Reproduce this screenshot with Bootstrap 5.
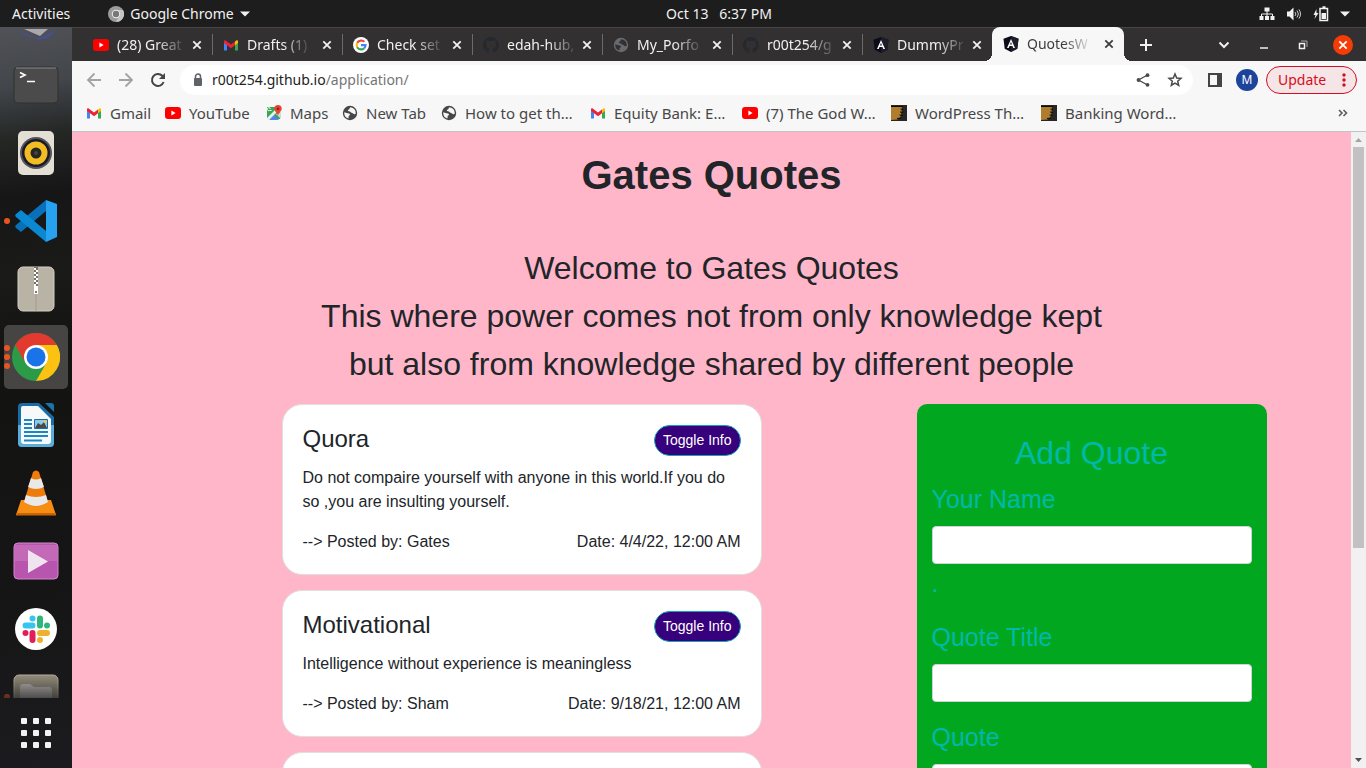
<!DOCTYPE html>
<html lang="en">
<head>
<meta charset="utf-8">
<meta name="viewport" content="width=device-width, initial-scale=1">
<title>Gates Quotes</title>
<link rel="stylesheet" href="https://cdn.jsdelivr.net/npm/bootstrap@5.3.0/dist/css/bootstrap.min.css">
<style>
  :root { --ui: "Noto Sans", "Open Sans", sans-serif; --page: "Liberation Sans", Arial, sans-serif; }
  body { font-family: var(--ui); font-size: 14px; line-height: 20px; background: #1d1d1d; }
  svg { display: block; flex: none; }
  button { font: inherit; color: inherit; }
  .plain-btn { background: none; border: 0; padding: 0; }

  /* desktop top bar */
  .system-bar { height: 27px; background: #1d1d1d; color: #f2f2f2; display: grid; grid-template-columns: 1fr auto 1fr; }
  .app-menu { margin-left: 38px; gap: 6px; }
  .system-clock { padding-left: 72px; }
  .status-icons { gap: 11px; }

  /* dock */
  .dock { width: 72px; background: linear-gradient(172deg, #505257 0, #43464a 60px, #34373a 85px, #252725 112px, #161616 170px, #1a1a19 250px, #131312 330px, #151515 560px, #1c1c20 100%); }
  .dock-item { width: 64px; height: 64px; border-radius: 5px; position: relative; }
  .dock-item.current { background: #464543; }
  .dock-peek { height: 22px; }
  .run-dots { position: absolute; left: 0; top: 0; bottom: 0; width: 6px; gap: 3px; }
  .run-dots i { width: 6px; height: 6px; border-radius: 50%; background: #e95420; }
  .dock-apps { height: 70px; }
  .dim-item { -webkit-mask-image: linear-gradient(#000 12px, rgba(0,0,0,.35) 33px); mask-image: linear-gradient(#000 12px, rgba(0,0,0,.35) 33px); }

  /* tab strip */
  .tab-strip { height: 34px; background: #323031; border-top: 1px solid #474546; padding-left: 10px; color: #f1f1f1; }
  .web-tab { flex: 0 1 130px; min-width: 0; padding: 0 10px 0 11px; position: relative; }
  .web-tab + .web-tab::before { content: ""; position: absolute; left: 0; top: 6px; height: 21px; width: 1px; background: #6d6b6c; }
  .web-tab .tab-name { white-space: nowrap; -webkit-mask-image: linear-gradient(90deg, #000 60%, rgba(0,0,0,.15)); mask-image: linear-gradient(90deg, #000 60%, rgba(0,0,0,.15)); }
  .web-tab.open { flex-basis: 132px; background: #f7f7f7; color: #3c3c3c; border-radius: 8px 8px 0 0; height: 34px; margin-top: -1px; }
  .web-tab.open::before { display: none; }
  .corner { position: absolute; bottom: 0; width: 8px; height: 8px; }
  .corner.start { left: -8px; background: radial-gradient(circle at 0 0, #323031 8px, #f7f7f7 8px); }
  .corner.end { right: -8px; background: radial-gradient(circle at 100% 0, #323031 8px, #f7f7f7 8px); }
  .win-controls { gap: 21px; padding-right: 13px; }
  .win-close { width: 20px; height: 20px; border-radius: 50%; background: #f53b06; }

  /* address row */
  .tool-row { height: 37px; background: #f7f7f7; padding: 0 9px 0 14px; color: #4a4a4a; }
  .omnibox { height: 30px; border-radius: 15px; background: #fff; padding: 0 10px 0 12px; margin: 0 15px 0 -2px; }
  .omnibox .path { color: #757575; }
  .omnibox .host { color: #222; }
  .avatar { width: 22px; height: 22px; border-radius: 50%; background: #1d449b; color: #fff; font-size: 12px; margin: 0 8px 0 14px; }
  .update-btn { height: 28px; width: 91px; border: 1px solid #d50d22; border-radius: 14px; background: #f6e5e6; color: #d50d22; padding: 0 10px 0 11px; }

  /* bookmarks */
  .mark-row { height: 34px; background: #f7f7f7; border-bottom: 1px solid #c4c4c6; padding: 0 18px 3px 14px; color: #474747; font-size: 15px; }
  .mark-list { display: grid; grid-template-columns: 79px 101px 76px 99px 149px 152px 149px 150px 150px; }
  .mark-list a { color: inherit; text-decoration: none; white-space: nowrap; }

  /* quotes page */
  .quotes-page { background: #ffb6c8; font-family: var(--page); font-size: 16px; line-height: 24px; color: #212529; overflow: hidden; }
  .page-inner { max-width: 1140px; padding-top: 19px; }
  .page-inner h1 { font-size: 40px; line-height: 48px; margin-bottom: 45px; }
  .welcome { font-size: 32px; line-height: 48px; }
  .quote-row { --bs-gutter-x: 30px; }
  .quote-card { max-width: 480px; border: 1px solid #dfdfdf; border-radius: 20px; margin: 0 auto 15px; }
  .quote-card .card-body { padding: 20px; }
  .quote-card h2 { font-size: 24px; margin-bottom: 12px; }
  .toggle-btn { font-size: 14px; line-height: 21px; padding: 4px 8px; border: 1px solid #17a2b8; border-radius: 16px; background: #37007d; color: #fff; height: 31px; }
  .quote-form { background: #02a720; border-radius: 10px; padding: 30px 15px; color: #00b8ac; font-size: 25px; line-height: 38px; }
  .quote-form h2 { font-size: 32px; margin-bottom: 8px; }
  .quote-form .form-control { height: 38px; border: 1px solid #ced4da; border-radius: 4px; background: #fff; }
  .quote-form label { margin-bottom: 8px; display: block; }

  .scroll-rail { width: 15px; background: #f1f1f1; }
  .scroll-thumb { width: 11px; flex: 0 0 63%; background: #c1c1c1; }
</style>
</head>
<body>
<svg width="0" height="0" class="position-absolute" aria-hidden="true">
  <symbol id="yt" viewBox="0 0 16 16"><rect y="2" width="16" height="12" rx="3" fill="#f00"/><path d="M6.400 5.600v4.800L10.600 8z" fill="#fff"/></symbol>
  <symbol id="gm" viewBox="0 0 16 16"><path d="M1 4v9.500h3V7z" fill="#4285f4"/><path d="M15 4v9.500h-3V7z" fill="#34a853"/><path d="M12 4.500l1-.8c1-.8 2-.3 2 .8v1.500L12 8.300z" fill="#fbbc04"/><path d="M1 4.500c0-1.100 1-1.600 2-.8l5 3.800 4-3v3.800l-4 3-4-3-3-2.300z" fill="#ea2435"/></symbol>
  <symbol id="goo" viewBox="0 0 16 16"><circle cx="8" cy="8" r="8" fill="#fff"/><g fill="none" stroke-width="2.200"><path d="M4.200 5.800A4.500 4.500 0 0 1 11.300 4.800" stroke="#ea4335"/><path d="M4.200 10.200a4.500 4.500 0 0 1 0-4.400" stroke="#fbbc05"/><path d="M11.200 11.200a4.500 4.500 0 0 1-7-1" stroke="#34a853"/><path d="M8 8.200h4.500a4.500 4.500 0 0 1-1.300 3" stroke="#4285f4"/></g></symbol>
  <symbol id="git" viewBox="0 0 16 16"><path fill="currentColor" d="M8 0a8 8 0 0 0-2.530 15.590c.4.070.55-.170.55-.380v-1.500c-2 .4-2.500-.500-2.700-.950-.1-.230-.5-.940-.8-1.130-.300-.150-.700-.520 0-.530.600 0 1.100.580 1.200.820.700 1.200 1.900.860 2.300.650.100-.520.300-.870.500-1.070-1.800-.200-3.600-.9-3.600-3.950 0-.870.300-1.590.8-2.150-.100-.200-.400-1.020.100-2.120 0 0 .7-.210 2.200.820a7.600 7.600 0 0 1 4 0c1.500-1.040 2.200-.820 2.200-.820.400 1.100.200 1.920.100 2.120.5.560.8 1.270.8 2.150 0 3.070-1.900 3.750-3.700 3.950.3.250.5.730.5 1.480v2.200c0 .210.150.460.550.380A8 8 0 0 0 8 0"/></symbol>
  <symbol id="globe" viewBox="0 0 16 16"><circle cx="8" cy="8" r="7.200" fill="currentColor"/><path d="M8.500 2.200c-1.500.8-.5 1.800-1.800 2.400-1.200.5-1.300 1.600.2 1.700 1.800 0 1.600 1.600 3.100 1.600 1.700-.1 1.200 2.200 3.800.8A6 6 0 0 0 8.500 2.200M2.300 7.300c1.500.5 3.100 1 4.600 1.100 1.300.1 1.500 1.700.3 2.200-1.100.4-.2 2-.9 3A5.900 5.900 0 0 1 2.300 7.300" fill="#f7f7f7"/></symbol>
  <symbol id="globe-dark" viewBox="0 0 16 16"><circle cx="8" cy="8" r="7.200" fill="#676a6f"/><path d="M8.500 2.200c-1.500.8-.5 1.800-1.800 2.400-1.200.5-1.300 1.600.2 1.700 1.800 0 1.600 1.600 3.100 1.600 1.700-.1 1.200 2.200 3.800.8A6 6 0 0 0 8.500 2.200M2.300 7.300c1.500.5 3.100 1 4.600 1.100 1.300.1 1.500 1.700.3 2.200-1.100.4-.2 2-.9 3A5.900 5.900 0 0 1 2.300 7.300" fill="#323031"/></symbol>
  <symbol id="ng" viewBox="0 0 16 16"><path d="M8 0l7.500 2.700-1.200 10L8 16l-6.300-3.300L.5 2.700z" fill="#0b0c18"/><path d="M8 0l7.500 2.700-1.200 10L8 16z" fill="#1c1d28"/><path d="M8 3l4 9h-1.700l-.8-2H6.500l-.8 2H4zm0 3L7 8.500h2z" fill="#fff" fill-rule="evenodd"/></symbol>
  <symbol id="map" viewBox="0 0 16 16"><path d="M1 2h13v12H1z" fill="#34a853"/><path d="M3 15l5-5 5 5z" fill="#5584f0"/><path d="M1 13l9-9 2 2-9 9H1z" fill="#eee"/><path d="M10 9l5 5V7z" fill="#d5d7da"/><path d="M12 0a3.700 3.700 0 0 1 3.700 3.700C15.700 6.500 12.500 7.500 12 11 11.500 7.500 8.300 6.500 8.300 3.700A3.700 3.700 0 0 1 12 0" fill="#ea4335"/><circle cx="12" cy="3.700" r="1.300" fill="#8e1c17"/><path d="M5.500 5.500h-2a1.500 1.500 0 1 1 .8-1.500" fill="none" stroke="#fff"/></symbol>
  <symbol id="wp" viewBox="0 0 16 16"><path d="M0 0h16v16H0z" fill="#292725"/><path d="M0 2h11l-.5 5-1 5-3 2.500L0 15z" fill="#b07c2e"/><path d="M0 1.500h12M9.500 4l2.500.5M9 7l3 .5M8.500 10l3 .5M6 13.500l4-.5" stroke="#0b0908"/></symbol>
  <symbol id="x" viewBox="0 0 10 10"><path d="M1.300 1.300l7.400 7.400M8.700 1.300L1.300 8.700" stroke="currentColor" stroke-width="1.800"/></symbol>
</svg>

<div class="vh-100 d-flex flex-column overflow-hidden">
  <header class="system-bar align-items-center flex-shrink-0">
    <div class="d-flex align-items-center">
      <button class="plain-btn ms-2 ps-1">Activities</button>
      <button class="app-menu plain-btn d-flex align-items-center">
        <svg width="16" height="16" viewBox="0 0 16 16"><circle cx="8" cy="8" r="8" fill="#9b9b9b"/><path d="M8 4h7a8 8 0 0 1-7 12l3-6z" fill="#c4c4c4"/><circle cx="8" cy="8" r="4.200" fill="#eee"/><circle cx="8" cy="8" r="3.200" fill="#777"/></svg>
        <span>Google Chrome</span>
        <svg width="10" height="6" viewBox="0 0 10 6"><path d="M0 0.500h10L5 5.500z" fill="currentColor"/></svg>
      </button>
    </div>
    <time class="system-clock">Oct 13 &nbsp; 6:37 PM</time>
    <div class="status-icons d-flex align-items-center justify-content-end pe-3">
      <svg width="16" height="14" viewBox="0 0 16 14" fill="#f2f2f2"><path d="M5.500 0.500h5v4h-5zM0.500 9h4v4h-4zM6 9h4v4H6zM11.500 9h4v4h-4z"/><path d="M8 4v5M2.500 9V7h11v2" fill="none" stroke="#f2f2f2"/></svg>
      <svg width="16" height="14" viewBox="0 0 16 14" fill="none" stroke="#f2f2f2"><path d="M1 4.500h2.500l4-4v13l-4-4H1z" fill="#f2f2f2" stroke="none"/><path d="M9 5a3 3 0 0 1 0 4M11 3.500a5.500 5.500 0 0 1 0 7M13 2.500a8 8 0 0 1 0 9" stroke="#ccc"/></svg>
      <svg width="16" height="16" viewBox="0 0 16 16"><path d="M3.500 3L.5 9h2l-1 4 4-6h-2z" fill="#f2f2f2"/><path d="M7 2.500h7.500v12H7zM9.500 1h3" fill="none" stroke="#f2f2f2" stroke-width="1.500"/><path d="M8.500 7H13v6H8.500z" fill="#f2f2f2"/></svg>
      <svg width="10" height="6" viewBox="0 0 10 6"><path d="M0 0.500h10L5 5.500z" fill="#f2f2f2"/></svg>
    </div>
  </header>

  <div class="d-flex flex-grow-1 overflow-hidden">
    <nav class="dock d-flex flex-column flex-shrink-0" aria-label="Dock">
      <div class="d-flex flex-column align-items-center gap-1 flex-grow-1 overflow-hidden">
        <div class="dock-peek flex-shrink-0">
          <svg width="40" height="16" viewBox="0 0 40 16"><path d="M8 2l16 7 8-7z" fill="#a9a9ad"/><path d="M2 2c5 5 12 6 18 8-7 1-14-2-18-8M39 2c-3 8-11 12-20 10 8-3 13-4 20-10" fill="#494f8b"/></svg>
        </div>
        <button class="dock-item plain-btn d-flex align-items-center justify-content-center flex-shrink-0" aria-label="Terminal">
          <svg width="46" height="38" viewBox="0 0 46 38"><rect x="1" y="1" width="44" height="36" rx="4" fill="#4b4b4b" stroke="#303030"/><path d="M3 2h40" stroke="#858585"/><path d="M7 6.500l5 2.500-5 2.500M14 15.500h8" fill="none" stroke="#fff" stroke-width="1.700"/></svg>
        </button>
        <button class="dock-item plain-btn d-flex align-items-center justify-content-center flex-shrink-0" aria-label="Rhythmbox">
          <svg width="38" height="46" viewBox="0 0 38 46"><rect x="1" y="1" width="36" height="44" rx="5" fill="#e3dfd5"/><circle cx="19" cy="23" r="16" fill="#555457"/><circle cx="19" cy="23" r="14" fill="#191a2b"/><circle cx="19" cy="23" r="11.500" fill="#f2bd22"/><circle cx="19" cy="23" r="5.500" fill="#252524"/><circle cx="19" cy="23" r="2" fill="#444"/></svg>
        </button>
        <button class="dock-item plain-btn d-flex align-items-center justify-content-center flex-shrink-0" aria-label="Visual Studio Code">
          <span class="run-dots d-flex flex-column justify-content-center"><i></i></span>
          <svg width="42" height="42" viewBox="0 0 42 42"><path d="M31 0v11L6 32l-5-4c-1-1-1-2 0-3z" fill="#0b70ba"/><path d="M31 42V31L6 10l-5 4c-1 1-1 2 0 3z" fill="#0b88d2"/><path d="M31 0l11 4v33l-11 5z" fill="#27a2f0"/></svg>
        </button>
        <button class="dock-item plain-btn d-flex align-items-center justify-content-center flex-shrink-0" aria-label="Archive Manager">
          <svg width="38" height="46" viewBox="0 0 38 46"><rect x="1" y="1" width="36" height="44" rx="5" fill="#b8b3a5" stroke="#d4d0c4"/><path d="M19 28v17" stroke="#a29d90"/><path d="M17 1h4v20h-4z" fill="#777368"/><path d="M17 3h2M19 5h2M17 7h2M19 9h2M17 11h2M19 13h2M17 15h2M19 17h2M17 19h2" stroke="#fff" stroke-width="2"/><path d="M17 20h4v8h-4z" fill="#fff"/><path d="M18 25h2v2h-2z" fill="#777"/></svg>
        </button>
        <button class="dock-item current plain-btn d-flex align-items-center justify-content-center flex-shrink-0" aria-label="Google Chrome">
          <span class="run-dots d-flex flex-column justify-content-center"><i></i><i></i><i></i></span>
          <svg width="48" height="48" viewBox="0 0 48 48"><circle cx="24" cy="24" r="24" fill="#2b9b48"/><path d="M24 12h20.800A24 24 0 0 1 24 48l10.400-18z" fill="#fcc212"/><path d="M3.200 12a24 24 0 0 1 41.600 0H24L13.600 30z" fill="#e23a2e"/><circle cx="24" cy="24" r="12" fill="#fff"/><circle cx="24" cy="24" r="9.500" fill="#1a73e8"/></svg>
        </button>
        <button class="dock-item plain-btn d-flex align-items-center justify-content-center flex-shrink-0" aria-label="LibreOffice Writer">
          <svg width="38" height="46" viewBox="0 0 38 46"><path d="M5 1h17l15 14v26q0 4-4 4H5q-4 0-4-4V5q0-4 4-4" fill="#186ca7"/><path d="M1 23h36v18q0 4-4 4H5q-4 0-4-4z" fill="#5aaedb"/><path d="M6 4h15l13 13v22q0 3-3 3H7q-3 0-3-3V6q0-2 2-2" fill="#f7f8f9"/><path d="M28 1h6q3 0 3 3v6z" fill="#1c73ac"/><path d="M7 18h8M7 22h8M7 26h8M7 30h24M7 34h24M7 38.500h18" stroke="#1b86c4" stroke-width="2"/><path d="M17.500 17.500h13v9h-13z" fill="#8ac9ed" stroke="#196da4"/><path d="M18 26l3-5 3 2 3-3 3 6z" fill="#494949"/><circle cx="28" cy="19.500" r="1.500" fill="#f5c842"/></svg>
        </button>
        <button class="dock-item plain-btn d-flex align-items-center justify-content-center flex-shrink-0" aria-label="VLC">
          <svg width="40" height="46" viewBox="0 0 40 46"><path d="M5 30h30l5 15H0z" fill="#f78d12"/><path d="M0 43h40v2.500H0z" fill="#c96503"/><path d="M17 2q3-3 6 0l9 30q-12 9-24 0z" fill="#ef7b0b"/><path d="M15 8q5 3 10 0l3 9q-8 4-16 0zM10 25q10 4 20 0l2 7q-12 8-24 0z" fill="#e9e9e9"/></svg>
        </button>
        <button class="dock-item plain-btn d-flex align-items-center justify-content-center flex-shrink-0" aria-label="Videos">
          <svg width="46" height="38" viewBox="0 0 46 38"><rect x="1" y="1" width="44" height="36" rx="4" fill="#b855ae" stroke="#d288ca"/><path d="M2 3h42v16H2z" fill="#c369b7"/><path d="M15 8l20 11.500L15 31z" fill="#f0e4f0"/></svg>
        </button>
        <button class="dock-item plain-btn d-flex align-items-center justify-content-center flex-shrink-0" aria-label="Slack">
          <svg width="42" height="42" viewBox="0 0 42 42"><circle cx="21" cy="21" r="21" fill="#fff"/><g stroke-width="6" stroke-linecap="round"><path d="M25 10.500v7M32 17.500h0" stroke="#2eb67d"/><path d="M10.500 17.500h7M17.500 10.500h0" stroke="#36c5f0"/><path d="M17.500 25v7M10.500 25h0" stroke="#e01e5a"/><path d="M25 25h7M25 32h0" stroke="#ecb22e"/></g></svg>
        </button>
        <button class="dock-item dim-item plain-btn d-flex align-items-center justify-content-center flex-shrink-0" aria-label="Files">
          <span class="run-dots d-flex flex-column justify-content-center"><i></i></span>
          <svg width="46" height="46" viewBox="0 0 46 46"><rect x="1" y="1" width="44" height="44" rx="5" fill="#8d8676" stroke="#b5ae9e"/><path d="M7 13q0-3 3-3h7l4 3h15q3 0 3 3v24H7z" fill="#b0aeaa"/></svg>
        </button>
      </div>
      <button class="dock-apps plain-btn d-flex align-items-center justify-content-center flex-shrink-0" aria-label="Show Applications">
        <svg width="30" height="30" viewBox="0 0 30 30" fill="#f3f3f3"><rect width="6" height="6" rx="1"/><rect x="12" width="6" height="6" rx="1"/><rect x="24" width="6" height="6" rx="1"/><rect y="12" width="6" height="6" rx="1"/><rect x="12" y="12" width="6" height="6" rx="1"/><rect x="24" y="12" width="6" height="6" rx="1"/><rect y="24" width="6" height="6" rx="1"/><rect x="12" y="24" width="6" height="6" rx="1"/><rect x="24" y="24" width="6" height="6" rx="1"/></svg>
      </button>
    </nav>

    <div class="d-flex flex-column flex-grow-1 overflow-hidden">
      <div class="tab-strip d-flex flex-shrink-0">
        <div class="web-tab d-flex align-items-center"><svg width="16" height="16" class="me-2"><use href="#yt"/></svg><span class="tab-name">(28) Great</span><button class="plain-btn ms-auto" aria-label="Close tab"><svg width="10" height="10"><use href="#x"/></svg></button></div>
        <div class="web-tab d-flex align-items-center"><svg width="16" height="16" class="me-2"><use href="#gm"/></svg><span class="tab-name">Drafts (1)</span><button class="plain-btn ms-auto" aria-label="Close tab"><svg width="10" height="10"><use href="#x"/></svg></button></div>
        <div class="web-tab d-flex align-items-center"><svg width="16" height="16" class="me-2"><use href="#goo"/></svg><span class="tab-name">Check set</span><button class="plain-btn ms-auto" aria-label="Close tab"><svg width="10" height="10"><use href="#x"/></svg></button></div>
        <div class="web-tab d-flex align-items-center"><svg width="16" height="16" class="me-2" color="#24292f"><use href="#git"/></svg><span class="tab-name">edah-hub,</span><button class="plain-btn ms-auto" aria-label="Close tab"><svg width="10" height="10"><use href="#x"/></svg></button></div>
        <div class="web-tab d-flex align-items-center"><svg width="16" height="16" class="me-2"><use href="#globe-dark"/></svg><span class="tab-name">My_Porfo</span><button class="plain-btn ms-auto" aria-label="Close tab"><svg width="10" height="10"><use href="#x"/></svg></button></div>
        <div class="web-tab d-flex align-items-center"><svg width="16" height="16" class="me-2" color="#24292f"><use href="#git"/></svg><span class="tab-name">r00t254/g</span><button class="plain-btn ms-auto" aria-label="Close tab"><svg width="10" height="10"><use href="#x"/></svg></button></div>
        <div class="web-tab d-flex align-items-center"><svg width="16" height="16" class="me-2"><use href="#ng"/></svg><span class="tab-name">DummyPr</span><button class="plain-btn ms-auto" aria-label="Close tab"><svg width="10" height="10"><use href="#x"/></svg></button></div>
        <div class="web-tab open d-flex align-items-center"><span class="corner start"></span><svg width="16" height="16" class="me-2"><use href="#ng"/></svg><span class="tab-name">QuotesW</span><button class="plain-btn ms-auto" aria-label="Close tab"><svg width="10" height="10"><use href="#x"/></svg></button><span class="corner end"></span></div>
        <button class="plain-btn ms-3" aria-label="New tab"><svg width="12" height="12" viewBox="0 0 12 12"><path d="M6 0v12M0 6h12" stroke="currentColor" stroke-width="2"/></svg></button>
        <div class="win-controls d-flex align-items-center ms-auto">
          <button class="plain-btn px-1" aria-label="Search tabs"><svg width="12" height="8" viewBox="0 0 12 8"><path d="M1.500 1.500L6 6l4.500-4.500" fill="none" stroke="currentColor" stroke-width="2"/></svg></button>
          <button class="plain-btn px-1" aria-label="Minimize"><svg width="10" height="8" viewBox="0 0 10 8"><path d="M1 7h8" stroke="currentColor" stroke-width="1.500"/></svg></button>
          <button class="plain-btn px-1" aria-label="Restore"><svg width="10" height="10" viewBox="0 0 10 10"><path d="M1.500 3.500h5v5h-5z" fill="none" stroke="currentColor" stroke-width="1.500"/><path d="M3 1h6v6" fill="none" stroke="#aaa"/></svg></button>
          <button class="win-close plain-btn d-flex align-items-center justify-content-center" aria-label="Close"><svg width="10" height="10" color="#fff"><use href="#x"/></svg></button>
        </div>
      </div>

      <div class="tool-row d-flex align-items-center flex-shrink-0">
        <button class="plain-btn me-3" aria-label="Back"><svg width="16" height="16" viewBox="0 0 16 16"><path d="M15 8H2M8.500 1.500L2 8l6.500 6.500" fill="none" stroke="#a3a3a3" stroke-width="1.800"/></svg></button>
        <button class="plain-btn me-3" aria-label="Forward"><svg width="16" height="16" viewBox="0 0 16 16"><path d="M1 8h13M7.500 1.500L14 8l-6.500 6.500" fill="none" stroke="#a3a3a3" stroke-width="1.800"/></svg></button>
        <button class="plain-btn me-3" aria-label="Reload"><svg width="16" height="16" viewBox="0 0 16 16"><path d="M13.600 10A6 6 0 1 1 12.300 3.800L14 5.500" fill="none" stroke="#444" stroke-width="2"/><path d="M15 1v6H9z" fill="#444"/></svg></button>
        <div class="omnibox d-flex align-items-center flex-grow-1">
          <svg width="12" height="14" viewBox="0 0 12 14" class="me-2"><path d="M3.500 6V3.500a2.500 2.500 0 0 1 5 0V6" fill="none" stroke="#5f6368" stroke-width="1.500"/><rect x="2" y="5" width="8" height="8" rx="1" fill="#5f6368"/></svg>
          <span class="flex-grow-1"><span class="host">r00t254.github.io</span><span class="path">/application/</span></span>
          <button class="plain-btn me-3" aria-label="Share"><svg width="16" height="16" viewBox="0 0 16 16"><path d="M12.500 3L3.500 8l9 5" fill="none" stroke="#4a4a4a" stroke-width="1.300"/><circle cx="12.500" cy="3.200" r="1.900" fill="#4a4a4a"/><circle cx="3.500" cy="8" r="1.900" fill="#4a4a4a"/><circle cx="12.500" cy="12.800" r="1.900" fill="#4a4a4a"/></svg></button>
          <button class="plain-btn" aria-label="Bookmark"><svg width="16" height="16" viewBox="0 0 16 16"><path d="M8 2l1.700 4 4.300.4-3.300 2.800 1 4.300L8 11.200l-3.700 2.300 1-4.300L2 6.400 6.300 6z" fill="none" stroke="#4a4a4a" stroke-width="1.500"/></svg></button>
        </div>
        <button class="plain-btn" aria-label="Side panel"><svg width="14" height="14" viewBox="0 0 14 14"><path d="M1 1h12v12H1z" fill="none" stroke="#444" stroke-width="2"/><path d="M9 0h5v14H9z" fill="#444"/></svg></button>
        <button class="avatar border-0 p-0 d-flex align-items-center justify-content-center">M</button>
        <button class="update-btn d-flex align-items-center justify-content-between">Update<svg width="4" height="14" viewBox="0 0 4 14" fill="#d50d22"><circle cx="2" cy="2" r="1.700"/><circle cx="2" cy="7" r="1.700"/><circle cx="2" cy="12" r="1.700"/></svg></button>
      </div>

      <div class="mark-row d-flex align-items-center justify-content-between flex-shrink-0">
        <div class="mark-list">
          <a href="#" class="d-flex align-items-center gap-2"><svg width="16" height="16"><use href="#gm"/></svg>Gmail</a>
          <a href="#" class="d-flex align-items-center gap-2"><svg width="16" height="16"><use href="#yt"/></svg>YouTube</a>
          <a href="#" class="d-flex align-items-center gap-2"><svg width="16" height="16"><use href="#map"/></svg>Maps</a>
          <a href="#" class="d-flex align-items-center gap-2"><svg width="16" height="16"><use href="#globe"/></svg>New Tab</a>
          <a href="#" class="d-flex align-items-center gap-2"><svg width="16" height="16"><use href="#globe"/></svg>How to get th…</a>
          <a href="#" class="d-flex align-items-center gap-2"><svg width="16" height="16"><use href="#gm"/></svg>Equity Bank: E…</a>
          <a href="#" class="d-flex align-items-center gap-2"><svg width="16" height="16"><use href="#yt"/></svg>(7) The God W…</a>
          <a href="#" class="d-flex align-items-center gap-2"><svg width="16" height="16"><use href="#wp"/></svg>WordPress Th…</a>
          <a href="#" class="d-flex align-items-center gap-2"><svg width="16" height="16"><use href="#wp"/></svg>Banking Word…</a>
        </div>
        <button class="plain-btn" aria-label="More bookmarks"><svg width="10" height="8" viewBox="0 0 10 8"><path d="M1 1l3 3-3 3M5.500 1l3 3-3 3" fill="none" stroke="#5a5a5f" stroke-width="1.600"/></svg></button>
      </div>

      <div class="d-flex flex-grow-1 overflow-hidden">
        <main class="quotes-page flex-grow-1">
          <div class="page-inner mx-auto">
            <h1 class="text-center fw-bold">Gates Quotes</h1>
            <p class="welcome text-center mb-3">Welcome to Gates Quotes<br>This where power comes not from only knowledge kept<br>but also from knowledge shared by different people</p>
            <div class="row quote-row mx-0">
              <div class="col-8">
                <article class="card quote-card">
                  <div class="card-body">
                    <div class="d-flex justify-content-between align-items-start"><h2>Quora</h2><button class="toggle-btn">Toggle Info</button></div>
                    <p class="mb-3">Do not compaire yourself with anyone in this world.If you do so ,you are insulting yourself.</p>
                    <div class="d-flex justify-content-between"><span>--&gt; Posted by: Gates</span><span>Date: 4/4/22, 12:00 AM</span></div>
                  </div>
                </article>
                <article class="card quote-card">
                  <div class="card-body">
                    <div class="d-flex justify-content-between align-items-start"><h2>Motivational</h2><button class="toggle-btn">Toggle Info</button></div>
                    <p class="mb-3">Intelligence without experience is meaningless</p>
                    <div class="d-flex justify-content-between"><span>--&gt; Posted by: Sham</span><span>Date: 9/18/21, 12:00 AM</span></div>
                  </div>
                </article>
                <article class="card quote-card"><div class="card-body"></div></article>
              </div>
              <div class="col-4">
                <form class="quote-form">
                  <h2 class="text-center">Add Quote</h2>
                  <div class="mb-3">
                    <label for="your-name">Your Name</label>
                    <input id="your-name" type="text" class="form-control">
                    <div>.</div>
                  </div>
                  <div class="mb-3">
                    <label for="quote-title">Quote Title</label>
                    <input id="quote-title" type="text" class="form-control">
                  </div>
                  <div class="mb-3">
                    <label for="quote-text">Quote</label>
                    <input id="quote-text" type="text" class="form-control">
                  </div>
                </form>
              </div>
            </div>
          </div>
        </main>
        <div class="scroll-rail d-flex flex-column align-items-center flex-shrink-0" aria-hidden="true">
          <svg width="15" height="15" viewBox="0 0 15 15"><path d="M4 10h7L7.500 6z" fill="#a3a3a3"/></svg>
          <div class="scroll-thumb"></div>
          <svg class="mt-auto" width="15" height="15" viewBox="0 0 15 15"><path d="M4 5h7L7.500 9z" fill="#505050"/></svg>
        </div>
      </div>
    </div>
  </div>
</div>
<script src="https://cdn.jsdelivr.net/npm/bootstrap@5.3.0/dist/js/bootstrap.bundle.min.js"></script>
</body>
</html>
